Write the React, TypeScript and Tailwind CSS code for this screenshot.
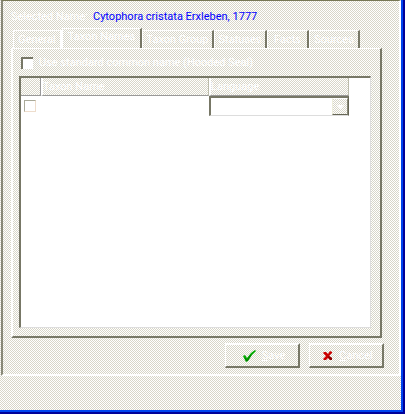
import React from "react";

const dither =
  "bg-[linear-gradient(#d8d6c8,#d8d6c8),linear-gradient(90deg,#000000_1px,#ffffff_1px),linear-gradient(180deg,#000000_1px,#ffffff_1px)] bg-[length:2px_2px] [background-blend-mode:lighten,difference,normal]";

const tabs = [
  { name: "General", width: "w-[49px]" },
  { name: "Taxon Names", width: "w-[80px]" },
  { name: "Taxon Group", width: "w-[72px]" },
  { name: "Statuses", width: "w-[53px]" },
  { name: "Facts", width: "w-[42px]" },
  { name: "Sources", width: "w-[51px]" },
];

function Tab({ name, width, active }: { name: string; width: string; active: boolean }) {
  return (
    <button
      type="button"
      role="tab"
      aria-selected={active}
      className={`${width} ${active ? "h-5 pb-1" : "h-[18px]"} shrink-0 border-t border-r-2 border-l border-t-white border-l-white ${
        name === "General" ? "border-r-white" : "border-r-[#777766]"
      } text-center leading-4 whitespace-nowrap`}
    >
      {name}
    </button>
  );
}

function ActionButton({ icon, children }: { icon: React.ReactNode; children: React.ReactNode }) {
  return (
    <button
      type="button"
      className="flex h-[25px] w-[75px] items-center justify-center gap-1.5 border-t-2 border-r-2 border-b-2 border-l border-t-white border-r-[#777766] border-b-[#777766] border-l-white pl-1"
    >
      {icon}
      <span>{children}</span>
    </button>
  );
}

function Check() {
  return (
    <svg width="13" height="12" viewBox="0 0 13 12" aria-hidden="true">
      <path d="M0 6 L2 5 L4 8 L8 3 L12 0 L13 1 L9 5 L5 11 L3 12 Z" fill="#00aa00" />
      <path d="M2 8 L4 11 L8 5" fill="none" stroke="#007700" strokeWidth="1" />
    </svg>
  );
}

function Cross() {
  return (
    <svg width="10" height="10" viewBox="0 0 10 10" aria-hidden="true">
      <path d="M1 1 L3 1 L5 3 L7 0 L9 1 L9 2 L6 5 L9 7 L9 9 L7 9 L5 7 L3 9 L1 9 L0 8 L3 5 L0 2 Z" fill="#cc0000" />
      <path d="M5 6 L7 9 L9 9 L9 7 L6 5 Z" fill="#880000" />
    </svg>
  );
}

export default function App() {
  return (
    <div className="flex h-screen flex-col border-r-2 border-b-2 border-[#000099] font-[Roboto,'Liberation_Sans',sans-serif] text-[11px] leading-4 text-white">
      <div className={`${dither} flex grow flex-col border-r-2 border-b-2 border-[#0044ee] pb-[34px] pl-px`}>
        <main className="flex grow flex-col border-t border-r-2 border-b-2 border-l-2 border-t-[#777755] border-r-white border-b-white border-l-[#888877] pb-1.5">
          <div className="flex h-[27px] pt-2 pl-2">
            <span className="w-[82px]">Selected Name:</span>
            <span className="text-[#0000ff]">Cytophora cristata Erxleben, 1777</span>
          </div>

          <div role="tablist" className="ml-2 flex h-5 items-end pl-0.5">
            {tabs.map((t) => (
              <Tab key={t.name} name={t.name} width={t.width} active={t.name === "Taxon Names"} />
            ))}
          </div>

          <section className="mr-[17px] ml-2 flex grow flex-col border-t border-r-2 border-b-2 border-l-2 border-t-white border-r-[#777766] border-b-[#777766] border-l-white pr-[9px] pb-2 pl-1.5">
            <label className="flex h-[27px] items-center gap-1.5 pl-0.5">
              <input
                type="checkbox"
                className="h-3 w-3 appearance-none border-t-2 border-l-2 border-[#777766] bg-white"
              />
              <span>Use standard common name (Hooded Seal)</span>
            </label>

            <div className="grow border-t-2 border-r border-b border-l-2 border-t-[#777766] border-r-[#dddddd] border-b-[#dddddd] border-l-[#777766] bg-white">
              <table className="table-fixed border-separate border-spacing-0">
                <colgroup>
                  <col className="w-5" />
                  <col className="w-[168px]" />
                  <col className="w-[140px]" />
                </colgroup>
                <thead>
                  <tr>
                    <th className={`${dither} h-[18px] border-r border-b border-[#999999] p-0`} aria-label="Selected" />
                    <th className={`${dither} border-r border-b border-l-2 border-r-[#bbbbaa] border-b-[#999999] border-l-white p-0 text-left font-normal`}>
                      Taxon Name
                    </th>
                    <th className={`${dither} border-r border-b border-l-2 border-r-[#bbbbaa] border-b-[#999999] border-l-white p-0 text-left font-normal`}>
                      Language
                    </th>
                  </tr>
                </thead>
                <tbody>
                  <tr>
                    <td className="h-5 p-0 pl-[3px]">
                      <input
                        type="checkbox"
                        aria-label="Select taxon name"
                        className="block h-3 w-3 appearance-none border border-t-[#aaaa99] border-r-[#eeddcc] border-b-[#eeddcc] border-l-[#aaaa99] bg-white"
                      />
                    </td>
                    <td className="p-0">
                      <input type="text" aria-label="Taxon name" className="block w-full bg-transparent px-1 text-black outline-none" />
                    </td>
                    <td className="p-0">
                      <div className="relative">
                        <select
                          aria-label="Language"
                          className="block h-5 w-full appearance-none border-t-2 border-r border-b border-l-2 border-t-[#777766] border-r-[#666655] border-b-[#dddddd] border-l-[#777766] bg-white text-black"
                        >
                          <option value=""></option>
                        </select>
                        <span
                          className={`${dither} pointer-events-none absolute top-0.5 right-px flex h-[17px] w-4 items-center justify-center border border-t-white border-r-[#888877] border-b-[#666655] border-l-[#eeeedd]`}
                        >
                          <svg width="7" height="4" viewBox="0 0 7 4" aria-hidden="true">
                            <path d="M0 0 H7 L3.5 4 Z" fill="#ffffff" />
                          </svg>
                        </span>
                      </div>
                    </td>
                  </tr>
                </tbody>
              </table>
            </div>
          </section>

          <footer className="mt-[5px] mr-[15px] flex justify-end gap-[9px]">
            <ActionButton icon={<Check />}>
              <span className="underline">S</span>ave
            </ActionButton>
            <ActionButton icon={<Cross />}>
              <span className="underline">C</span>ancel
            </ActionButton>
          </footer>
        </main>
      </div>
    </div>
  );
}
